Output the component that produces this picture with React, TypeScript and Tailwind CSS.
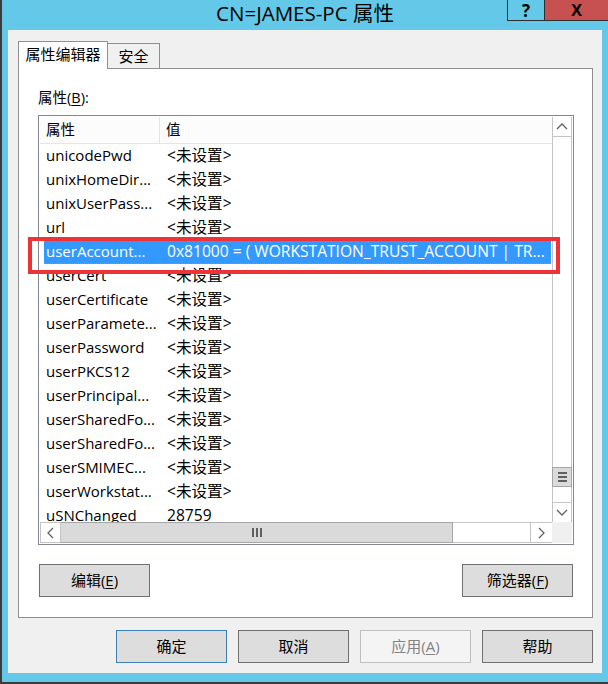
import React from "react";

const FONT = "font-['Open_Sans','Noto_Sans_CJK_SC',sans-serif]";

const rows: { name: string; value: string }[] = [
  { name: "unicodePwd", value: "<未设置>" },
  { name: "unixHomeDir...", value: "<未设置>" },
  { name: "unixUserPass...", value: "<未设置>" },
  { name: "url", value: "<未设置>" },
  { name: "userAccount...", value: "0x81000 = ( WORKSTATION_TRUST_ACCOUNT | TR..." },
  { name: "userCert", value: "<未设置>" },
  { name: "userCertificate", value: "<未设置>" },
  { name: "userParamete...", value: "<未设置>" },
  { name: "userPassword", value: "<未设置>" },
  { name: "userPKCS12", value: "<未设置>" },
  { name: "userPrincipal...", value: "<未设置>" },
  { name: "userSharedFo...", value: "<未设置>" },
  { name: "userSharedFo...", value: "<未设置>" },
  { name: "userSMIMEC...", value: "<未设置>" },
  { name: "userWorkstat...", value: "<未设置>" },
  { name: "uSNChanged", value: "28759" },
];

const SELECTED = 4;

function Chevron({ dir }: { dir: "up" | "down" | "left" | "right" }) {
  const pts = {
    up: "1,7 6,2 11,7",
    down: "1,2 6,7 11,2",
    left: "7,1 2,6 7,11",
    right: "2,1 7,6 2,11",
  }[dir];
  const vertical = dir === "up" || dir === "down";
  return (
    <svg
      width={vertical ? 12 : 9}
      height={vertical ? 9 : 12}
      viewBox={vertical ? "0 0 12 9" : "0 0 9 12"}
    >
      <polyline points={pts} fill="none" stroke="#606060" strokeWidth="1.3" />
    </svg>
  );
}

function Button({
  children,
  variant = "normal",
}: {
  children: React.ReactNode;
  variant?: "normal" | "default" | "disabled";
}) {
  const cls =
    variant === "default"
      ? "border-[#3c7fb1] bg-[#dddddd] text-black"
      : variant === "disabled"
        ? "border-[#bfbfbf] bg-[#f4f4f4] text-[#838383]"
        : "border-[#707070] bg-[#dddddd] text-black";
  return (
    <div
      className={`flex h-[33px] w-[111px] items-center justify-center border text-[15px] ${cls}`}
    >
      {children}
    </div>
  );
}

function U({ children }: { children: React.ReactNode }) {
  return <span className="underline underline-offset-2">{children}</span>;
}

export default function App() {
  return (
    <div
      className={`relative flex h-[684px] w-[608px] flex-col border-b-2 border-l-2 border-[#3c3c3c] bg-[#64c9e9] ${FONT}`}
    >
      {/* Title bar */}
      <div className="grid h-[30px] grid-cols-[1fr_auto_1fr]">
        <div />
        <div className="text-[20.5px] leading-[26px] text-black">
          CN=JAMES-PC 属性
        </div>
        <div className="flex items-start justify-end">
          <div className="flex h-[21px] w-[37px] items-center justify-center border-b border-l border-[#2e2e2e] text-[17px] font-bold leading-[17px]">
            ?
          </div>
          <div className="flex h-[21px] w-[64px] items-center justify-center border-b border-l border-[#2e2e2e] bg-[#c75050] text-[16px] font-bold leading-[17px]">
            X
          </div>
        </div>
      </div>

      {/* Client area */}
      <div className="mx-[6px] flex h-[643px] flex-col bg-[#f0f0f0] pb-[10px] pl-[10px] pr-[9px] pt-[11px]">
        {/* Tabs */}
        <div className="flex items-end">
          <div className="relative z-10 -mb-px flex h-[28px] w-[90px] items-center justify-center border border-b-0 border-[#8e8f8f] bg-white pb-[2px] text-[15px]">
            属性编辑器
          </div>
          <div className="flex h-[25px] w-[52px] items-center justify-center border border-b-0 border-l-0 border-[#8e8f8f] bg-[#f0f0f0] pt-[1px] text-[15px]">
            安全
          </div>
        </div>

        {/* Panel */}
        <div className="flex h-[550px] flex-col border border-[#8e8f8f] bg-white pl-[19px] pr-[18px] pt-[19px]">
          <div className="h-[20px] text-[14.5px] leading-[20px]">
            属性(<U>B</U>):
          </div>

          {/* List box */}
          <div className="mt-[7px] h-[430px] w-[536px] border border-[#828790] p-px">
            <div className="grid h-full grid-cols-[1fr_20px] grid-rows-[1fr_21px]">
              {/* Content */}
              <div className="overflow-hidden">
                <div className="flex h-[27px] border-b border-[#e5e5e5] bg-[#fcfcfc] text-[14.5px] leading-[26px]">
                  <div className="w-[120px] border-r border-[#e5e5e5] pl-[6px]">
                    属性
                  </div>
                  <div className="flex-1 pl-[6px]">值</div>
                </div>
                {rows.map((r, i) => {
                  const sel = i === SELECTED;
                  return (
                    <div
                      key={i}
                      className={`ml-[4px] mr-px flex h-[24px] whitespace-nowrap leading-[23px] ${
                        sel
                          ? "border-b border-dotted border-[#d0883a] bg-[#3399ff] text-white"
                          : "text-black"
                      }`}
                    >
                      <div className="w-[116px] overflow-hidden px-[2px] text-[15px]">
                        {r.name}
                      </div>
                      <div className="flex-1 overflow-hidden pl-[7px] text-[15.6px]">
                        {r.value}
                      </div>
                    </div>
                  );
                })}
              </div>

              {/* Vertical scrollbar */}
              <div className="flex flex-col border-x border-[#c4c4c4]">
                <div className="flex h-[20px] items-center justify-center border-b border-[#c4c4c4]">
                  <Chevron dir="up" />
                </div>
                <div className="flex flex-1 flex-col">
                  <div className="h-[330px]" />
                  <div className="-mx-px flex h-[20px] flex-col items-center justify-center gap-[2px] border border-[#a5a5a5] bg-[#dadada]">
                    <div className="h-[2px] w-[9px] bg-[#606060]" />
                    <div className="h-[2px] w-[9px] bg-[#606060]" />
                    <div className="h-[2px] w-[9px] bg-[#606060]" />
                  </div>
                </div>
                <div className="flex h-[20px] items-center justify-center border-t border-[#c4c4c4]">
                  <Chevron dir="down" />
                </div>
              </div>

              {/* Horizontal scrollbar */}
              <div className="flex h-[21px] border-y border-[#c4c4c4]">
                <div className="flex w-[21px] items-center justify-center border-x border-[#c4c4c4]">
                  <Chevron dir="left" />
                </div>
                <div className="-my-px flex w-[392px] items-center justify-center gap-[2px] border border-l-0 border-[#a5a5a5] bg-[#dadada]">
                  <div className="h-[9px] w-[2px] bg-[#606060]" />
                  <div className="h-[9px] w-[2px] bg-[#606060]" />
                  <div className="h-[9px] w-[2px] bg-[#606060]" />
                </div>
                <div className="flex-1" />
                <div className="flex w-[22px] items-center justify-center border-l border-[#c4c4c4]">
                  <Chevron dir="right" />
                </div>
              </div>
              <div className="bg-[#f0f0f0]" />
            </div>
          </div>

          <div className="mt-[19px] flex justify-between px-px">
            <Button>
              编辑(<U>E</U>)
            </Button>
            <Button>
              筛选器(<U>F</U>)
            </Button>
          </div>
        </div>

        {/* Dialog buttons */}
        <div className="mt-[12px] flex justify-end gap-[11px]">
          <Button variant="default">确定</Button>
          <Button>取消</Button>
          <Button variant="disabled">
            应用(<U>A</U>)
          </Button>
          <Button>帮助</Button>
        </div>
      </div>

      {/* Red annotation box */}
      <div className="pointer-events-none absolute left-[26px] top-[237px] h-[37px] w-[532px] border-4 border-[#ee3338]" />
    </div>
  );
}
